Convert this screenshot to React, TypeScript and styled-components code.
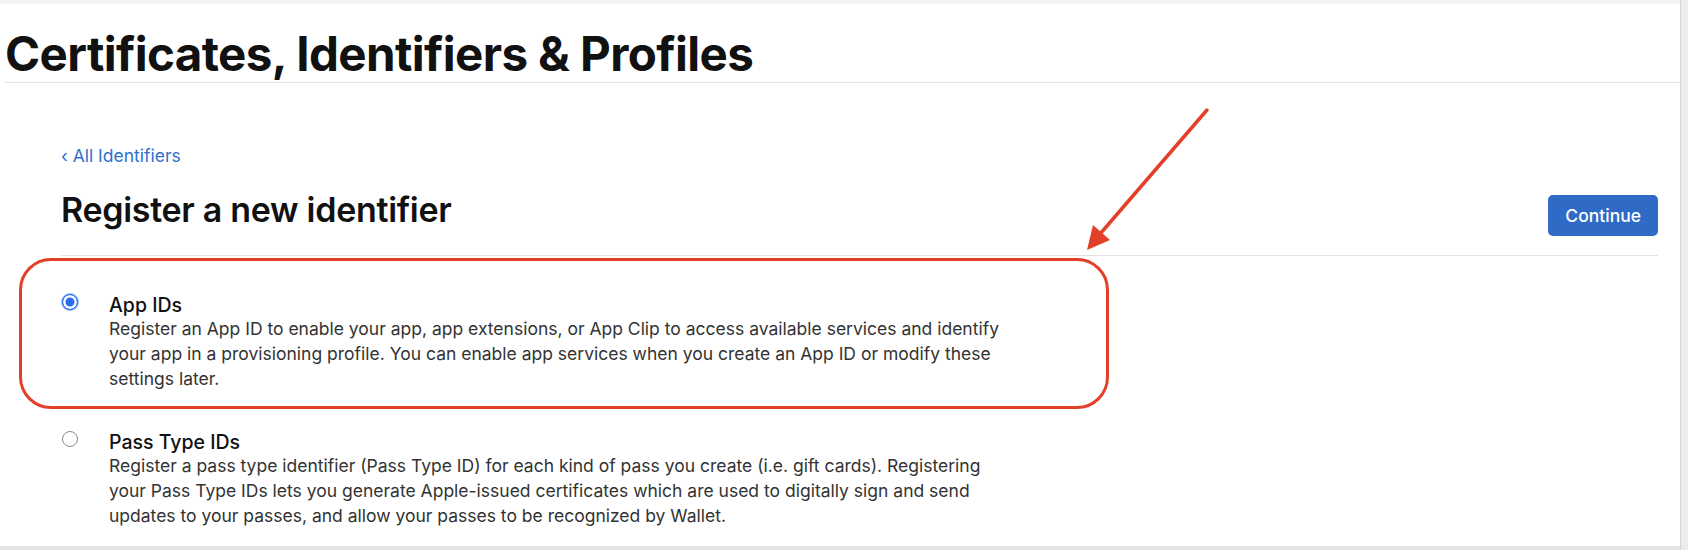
import { ReactElement } from 'react';
import styled, { createGlobalStyle } from 'styled-components';

const GlobalStyle = createGlobalStyle`
  html, body {
    margin: 0;
    padding: 0;
    background: #ffffff;
  }
  body {
    font-family: Inter, "Noto Sans", "Liberation Sans", sans-serif;
    color: #1d1d1f;
    -webkit-font-smoothing: antialiased;
  }
`;

type Identifier = {
  id: string;
  title: string;
  lines: string[];
  checked: boolean;
};

const IDENTIFIERS: Identifier[] = [
  {
    id: 'app-ids',
    title: 'App IDs',
    lines: [
      'Register an App ID to enable your app, app extensions, or App Clip to access available services and identify',
      'your app in a provisioning profile. You can enable app services when you create an App ID or modify these',
      'settings later.',
    ],
    checked: true,
  },
  {
    id: 'pass-type-ids',
    title: 'Pass Type IDs',
    lines: [
      'Register a pass type identifier (Pass Type ID) for each kind of pass you create (i.e. gift cards). Registering',
      'your Pass Type IDs lets you generate Apple-issued certificates which are used to digitally sign and send',
      'updates to your passes, and allow your passes to be recognized by Wallet.',
    ],
    checked: false,
  },
];

function App(): ReactElement {
  return (
    <Frame>
      <GlobalStyle />
      <Main>
        <TopStrip />
        <Header>
          <PageTitle>Certificates, Identifiers &amp; Profiles</PageTitle>
        </Header>
        <Content>
          <BackLink href="#">‹ All Identifiers</BackLink>
          <HeadingRow>
            <Heading>Register a new identifier</Heading>
            <ContinueButton type="button">Continue</ContinueButton>
          </HeadingRow>
          <OptionList>
            {IDENTIFIERS.map(item => (
              <Option key={item.id}>
                <Radio checked={item.checked} />
                <OptionBody>
                  <OptionTitle>{item.title}</OptionTitle>
                  <OptionText>
                    {item.lines.map(line => (
                      <span key={line}>{line}</span>
                    ))}
                  </OptionText>
                </OptionBody>
              </Option>
            ))}
          </OptionList>
        </Content>
        <BottomStrip />
      </Main>
      <Scrollbar />

      {/* annotation drawn over the screenshot */}
      <Highlight />
      <ArrowLayer width="1688" height="550" viewBox="0 0 1688 550">
        <line
          x1="1207"
          y1="110"
          x2="1100"
          y2="234"
          stroke="#e3402a"
          strokeWidth="3.5"
          strokeLinecap="round"
        />
        <polygon points="1087,250 1110,240 1093,225" fill="#e3402a" />
      </ArrowLayer>
    </Frame>
  );
}

export default App;

const Frame = styled.div`
  position: relative;
  display: flex;
  width: 1688px;
  height: 550px;
  overflow: hidden;
  background: #ffffff;
`;

const Main = styled.div`
  flex: 1;
  display: flex;
  flex-direction: column;
  min-width: 0;
`;

const TopStrip = styled.div`
  height: 4px;
  background: #f3f3f3;
`;

const Header = styled.header`
  margin-left: 5px;
  padding-top: 24px;
  padding-bottom: 2px;
  border-bottom: 1px solid #e2e2e2;
`;

const PageTitle = styled.h1`
  margin: 0;
  font-size: 47.5px;
  line-height: 52px;
  font-weight: 700;
  letter-spacing: -0.6px;
  color: #111111;
`;

const Content = styled.main`
  flex: 1;
  padding: 63px 22px 0 61px;
`;

const BackLink = styled.a`
  display: block;
  font-size: 17.5px;
  line-height: 20px;
  color: #2f6fd0;
  text-decoration: none;
`;

const HeadingRow = styled.div`
  display: flex;
  align-items: flex-end;
  justify-content: space-between;
  padding-top: 24px;
  padding-bottom: 19px;
  border-bottom: 1px solid #e2e2e2;
`;

const Heading = styled.h2`
  margin: 0 0 6px;
  font-size: 34px;
  line-height: 40px;
  font-weight: 600;
  letter-spacing: -0.3px;
  color: #111111;
`;

const ContinueButton = styled.button`
  height: 41px;
  padding: 0 17px;
  border: none;
  border-radius: 5px;
  background: #2f6bc6;
  color: #ffffff;
  font-family: inherit;
  font-size: 17.5px;
  font-weight: 500;
  cursor: pointer;
`;

const OptionList = styled.div`
  display: flex;
  flex-direction: column;
  gap: 40px;
  padding-top: 38px;
`;

const Option = styled.label`
  display: grid;
  grid-template-columns: 48px 1fr;
  align-items: start;
`;

const Radio = styled.span<{ checked: boolean }>`
  box-sizing: border-box;
  width: 16px;
  height: 16px;
  margin: 0 0 0 1px;
  border-radius: 50%;
  border: 1px solid ${props => (props.checked ? '#2c6df0' : '#8a8a8a')};
  background: ${props => (props.checked ? '#2c6df0' : '#ffffff')};
  box-shadow: ${props =>
    props.checked ? 'inset 0 0 0 2.5px #ffffff, 0 0 0 1px #9dbdf7' : 'none'};
`;

const OptionBody = styled.div`
  display: flex;
  flex-direction: column;
`;

const OptionTitle = styled.div`
  font-size: 19.5px;
  line-height: 22px;
  font-weight: 500;
  color: #111111;
`;

const OptionText = styled.p`
  display: flex;
  flex-direction: column;
  margin: 0;
  font-size: 17.5px;
  line-height: 25px;
  color: #333333;
  white-space: nowrap;
`;

const BottomStrip = styled.div`
  height: 4px;
  background: #e6e6e6;
`;

const Scrollbar = styled.div`
  width: 7px;
  border-left: 1px solid #d6d6d6;
  background: #ececec;
`;

const Highlight = styled.div`
  position: absolute;
  left: 19px;
  top: 258px;
  width: 1090px;
  height: 151px;
  box-sizing: border-box;
  border: 3px solid #e3402a;
  border-radius: 32px;
  pointer-events: none;
`;

const ArrowLayer = styled.svg`
  position: absolute;
  left: 0;
  top: 0;
  pointer-events: none;
`;
